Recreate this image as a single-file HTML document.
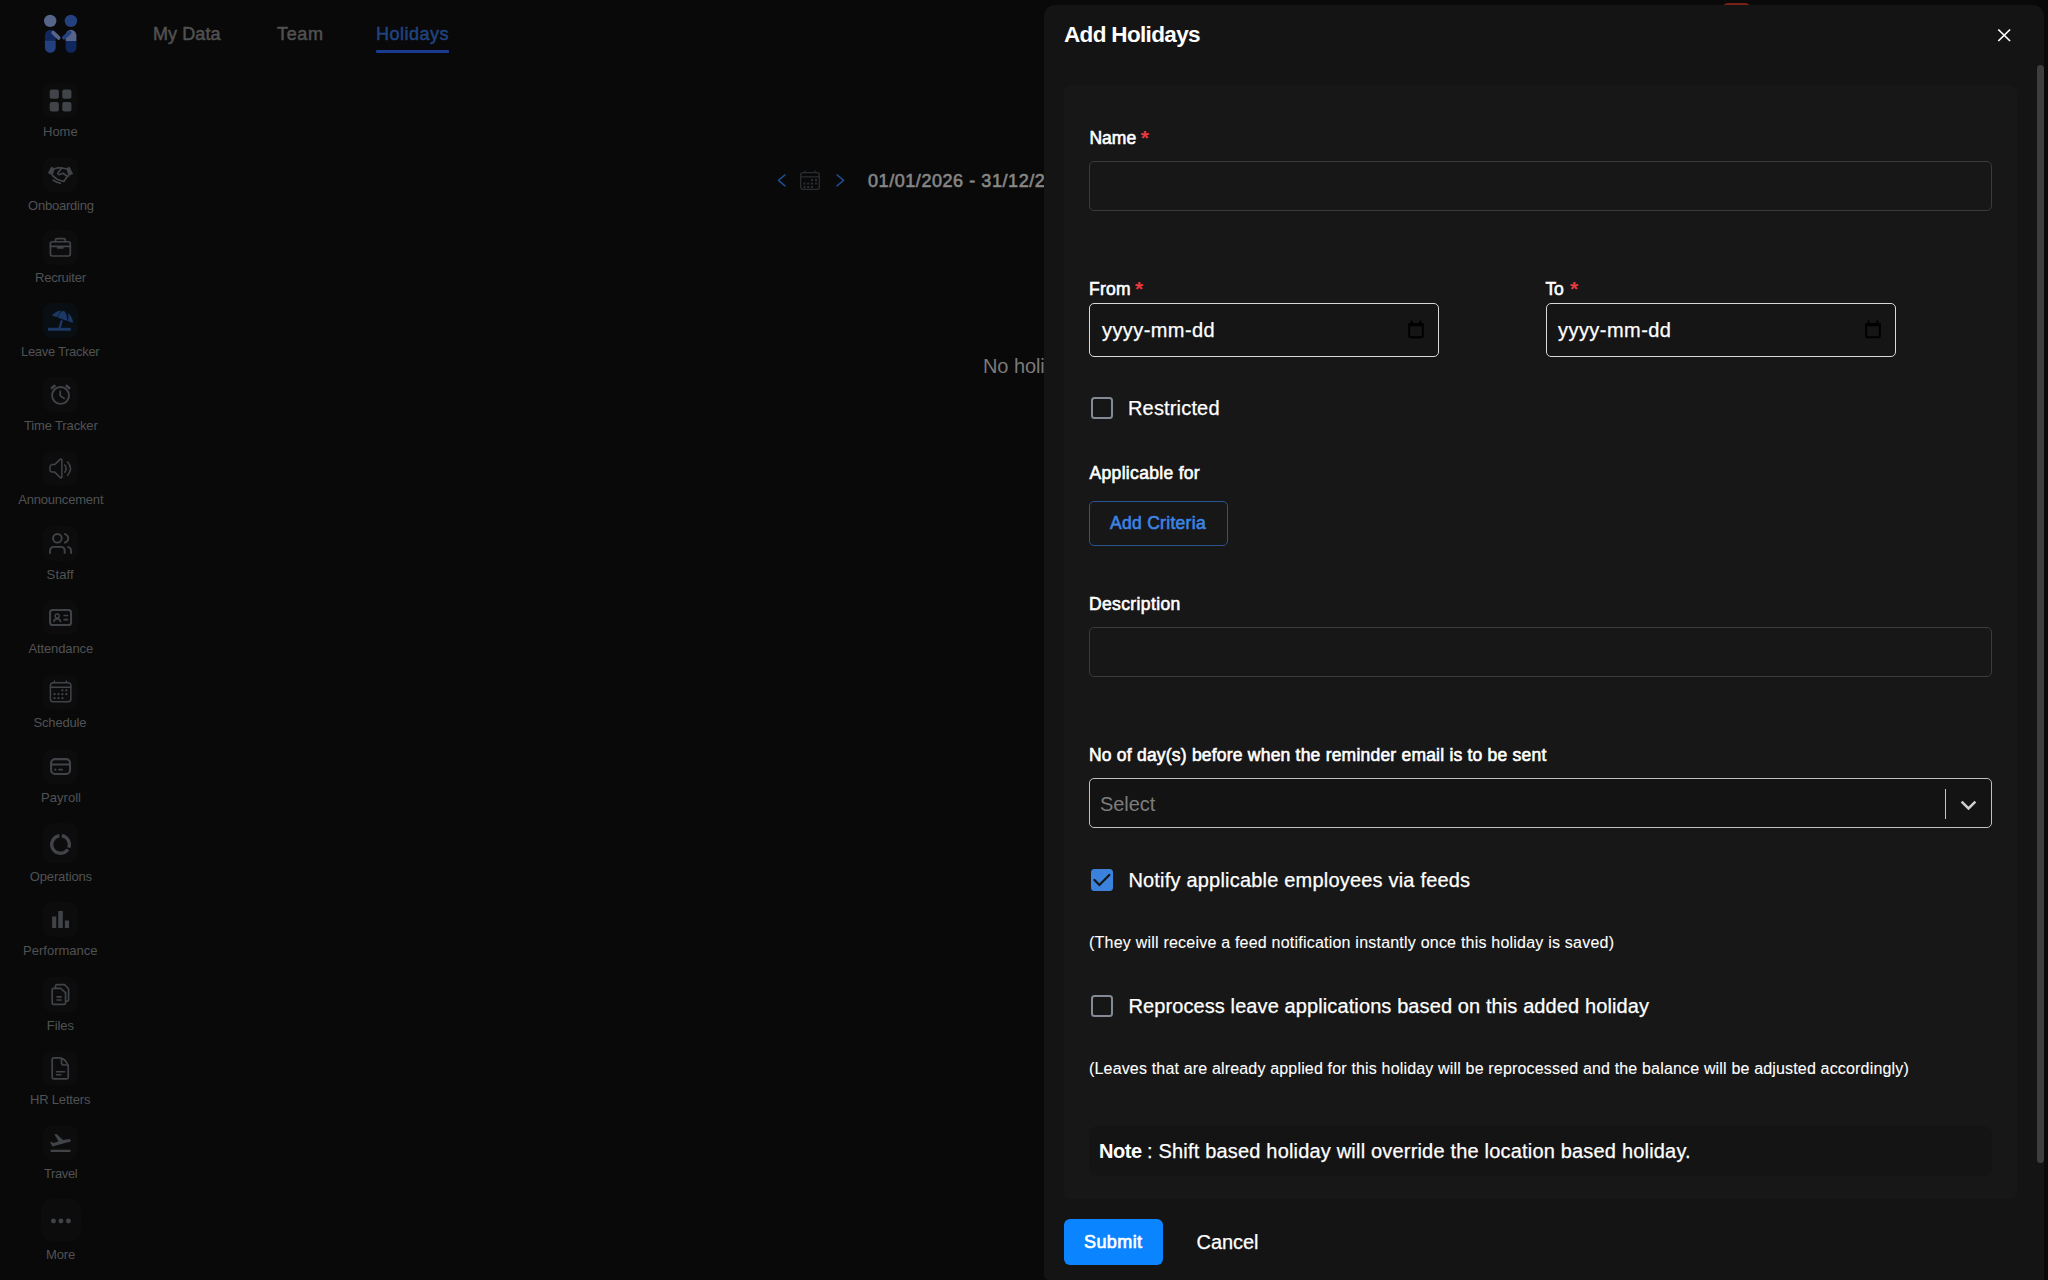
<!DOCTYPE html>
<html lang="en"><head><meta charset="utf-8"><title>Add Holidays</title>
<style>
*{box-sizing:border-box;margin:0;padding:0}
html,body{width:2048px;height:1280px;overflow:hidden;background:#090909;font-family:"Liberation Sans",Arial,sans-serif;}
body{position:relative}
.t{position:absolute;white-space:nowrap;line-height:1;display:block}
.a{position:absolute}
#panel{position:absolute;left:1044px;top:5px;width:1000px;height:1275px;background:#141414;border-radius:11px 11px 0 5px}
#card{position:absolute;left:1064px;top:85px;width:953px;height:1114px;background:#171717;border-radius:7px}
.inp{position:absolute;border:1.25px solid #3b3b3b;border-radius:5px;background:#171717}
.dinp{position:absolute;border:1.5px solid #d9d9d9;border-radius:5px;background:#151515}
.cb{position:absolute;width:22.5px;height:22.5px;border:2.5px solid #838a95;border-radius:3.5px;background:#161616}

</style></head><body>
<!-- ===== background app (dimmed) ===== -->
<svg class="a" style="left:30px;top:5px;width:64px;height:60px" viewBox="30 5 64 60">
<circle cx="50.2" cy="20.9" r="6.2" fill="#56648a"/>
<circle cx="70.9" cy="20.9" r="6.2" fill="#23407f"/>
<path d="M44.9,35.2 a5.4,5.4 0 0 1 10.8,0 V40.6 H44.9 Z" fill="#10275e"/>
<path d="M44.9,40.6 H55.7 V47.4 a5.4,5.4 0 0 1 -10.8,0 Z" fill="#23407f"/>
<path d="M65.6,35.2 a5.4,5.4 0 0 1 10.8,0 V41.1 H65.6 Z" fill="#56648a"/>
<path d="M65.6,41.1 H76.4 V47.4 a5.4,5.4 0 0 1 -10.8,0 Z" fill="#10275e"/>
<path d="M53.2,32.6 L58.6,37.9" stroke="#56648a" stroke-width="3.8" stroke-linecap="round"/>
<path d="M69.6,32.6 L63.9,37.7" stroke="#23407f" stroke-width="3.8" stroke-linecap="round"/>
</svg>
<div class="a" style="left:43px;top:82.5px;width:34.5px;height:35px;border-radius:9px;background:#0c0c0c"></div>
<svg class="a" style="left:43px;top:83px;width:34px;height:34px;overflow:visible" viewBox="186.7 186.7 906.7 906.7" fill="none" stroke="#404348" stroke-linecap="round" stroke-linejoin="round"><rect x="365" y="357" width="245" height="252" rx="55" fill="#404348" stroke="none"/><rect x="365" y="695" width="245" height="252" rx="55" fill="#404348" stroke="none"/><rect x="700" y="357" width="245" height="252" rx="55" fill="#404348" stroke="none"/><rect x="700" y="695" width="245" height="252" rx="55" fill="#404348" stroke="none"/></svg>
<div class="a" style="left:43px;top:156.5px;width:34.5px;height:35px;border-radius:9px;background:#0c0c0c"></div>
<svg class="a" style="left:43px;top:157px;width:34px;height:34px;overflow:visible" viewBox="186.7 186.7 906.7 906.7" fill="none" stroke="#404348" stroke-linecap="round" stroke-linejoin="round"><polygon points="318,612 405,448 505,490 440,680" fill="#404348" stroke="none"/><polygon points="992,640 895,448 800,490 870,690" fill="#404348" stroke="none"/><path d="M500,500 L600,470 L690,480 L800,500" stroke-width="46"/><path d="M440,680 L560,780 L740,840 L840,700 L870,690" stroke-width="46"/><path d="M690,480 L590,600 Q565,665 640,650 L720,620 L830,700" stroke-width="46"/><path d="M455,805 Q540,870 650,885" stroke-width="46"/></svg>
<div class="a" style="left:43px;top:229.5px;width:34.5px;height:35px;border-radius:9px;background:#0c0c0c"></div>
<svg class="a" style="left:43px;top:230px;width:34px;height:34px;overflow:visible" viewBox="186.7 186.7 906.7 906.7" fill="none" stroke="#404348" stroke-linecap="round" stroke-linejoin="round"><rect x="385" y="500" width="530" height="380" rx="50" stroke-width="46"/><path d="M520,495 L520,455 Q520,415 560,415 L740,415 Q780,415 780,455 L780,495" stroke-width="46"/><path d="M385,625 L915,625" stroke-width="46"/><rect x="565" y="640" width="170" height="50" rx="8" fill="#404348" stroke="none"/></svg>
<div class="a" style="left:43px;top:302.5px;width:34.5px;height:35px;border-radius:9px;background:#090e13"></div>
<svg class="a" style="left:43px;top:303px;width:34px;height:34px;overflow:visible" viewBox="186.7 186.7 906.7 906.7" fill="none" stroke="#404348" stroke-linecap="round" stroke-linejoin="round"><path d="M425,520 Q520,400 680,385 Q590,450 565,570 Z" fill="#1c3865" stroke="none"/><path d="M585,580 Q600,440 740,395 Q830,460 835,670 Z" fill="#1c3865" stroke="none"/><path d="M855,455 Q980,560 990,720 L850,665 Q880,560 855,455 Z" fill="#1c3865" stroke="none"/><path d="M690,650 L625,860" stroke="#1c3865" stroke-width="60" stroke-linecap="butt"/><rect x="320" y="850" width="610" height="75" rx="15" fill="#1c3865" stroke="none"/></svg>
<div class="a" style="left:43px;top:376.5px;width:34.5px;height:35px;border-radius:9px;background:#0c0c0c"></div>
<svg class="a" style="left:43px;top:377px;width:34px;height:34px;overflow:visible" viewBox="186.7 186.7 906.7 906.7" fill="none" stroke="#404348" stroke-linecap="round" stroke-linejoin="round"><circle cx="655" cy="680" r="225" stroke-width="50"/><path d="M645,548 L645,690 L768,768" stroke-width="45" stroke-linecap="butt" stroke-linejoin="miter"/><path d="M400,500 L515,405" stroke-width="65" stroke-linecap="butt"/><path d="M795,405 L910,500" stroke-width="65" stroke-linecap="butt"/></svg>
<div class="a" style="left:43px;top:450.5px;width:34.5px;height:35px;border-radius:9px;background:#0c0c0c"></div>
<svg class="a" style="left:43px;top:451px;width:34px;height:34px;overflow:visible" viewBox="186.7 186.7 906.7 906.7" fill="none" stroke="#404348" stroke-linecap="round" stroke-linejoin="round"><path d="M690,415 L690,895 Q660,910 640,890 L500,750 L420,750 Q375,740 372,690 L372,605 Q380,555 420,550 L500,550 L640,410 Q665,395 690,415 Z" stroke-width="40"/><path d="M758,545 Q850,655 758,765" stroke-width="40" stroke-linecap="butt"/><path d="M835,465 Q1005,655 835,845" stroke-width="40" stroke-linecap="butt"/></svg>
<div class="a" style="left:43px;top:525.5px;width:34.5px;height:35px;border-radius:9px;background:#0c0c0c"></div>
<svg class="a" style="left:43px;top:526px;width:34px;height:34px;overflow:visible" viewBox="186.7 186.7 906.7 906.7" fill="none" stroke="#404348" stroke-linecap="round" stroke-linejoin="round"><circle cx="570" cy="515" r="115" stroke-width="50"/><path d="M375,925 L375,850 Q375,745 480,745 L660,745 Q765,745 765,850 L765,925" stroke-width="50" stroke-linecap="butt"/><path d="M750,395 Q860,420 860,515 Q860,610 750,635" stroke-width="50" stroke-linecap="butt"/><path d="M835,745 Q935,760 935,850 L935,925" stroke-width="50" stroke-linecap="butt"/></svg>
<div class="a" style="left:43px;top:599.5px;width:34.5px;height:35px;border-radius:9px;background:#0c0c0c"></div>
<svg class="a" style="left:43px;top:600px;width:34px;height:34px;overflow:visible" viewBox="186.7 186.7 906.7 906.7" fill="none" stroke="#404348" stroke-linecap="round" stroke-linejoin="round"><rect x="375" y="455" width="560" height="400" rx="70" stroke-width="55"/><circle cx="565" cy="615" r="55" stroke-width="40"/><path d="M478,755 Q490,690 565,690 Q640,690 652,755" stroke-width="46"/><path d="M750,600 L840,600 M750,710 L840,710" stroke-width="45"/></svg>
<div class="a" style="left:43px;top:674.5px;width:34.5px;height:35px;border-radius:9px;background:#0c0c0c"></div>
<svg class="a" style="left:43px;top:675px;width:34px;height:34px;overflow:visible" viewBox="186.7 186.7 906.7 906.7" fill="none" stroke="#404348" stroke-linecap="round" stroke-linejoin="round"><rect x="385" y="395" width="545" height="505" rx="75" stroke-width="40"/><path d="M385,515 L930,515" stroke-width="40"/><path d="M490,335 L490,400 M810,335 L810,400" stroke-width="40" stroke-linecap="butt"/><circle cx="705" cy="595" r="30" fill="#404348" stroke="none"/><circle cx="810" cy="595" r="30" fill="#404348" stroke="none"/><circle cx="495" cy="700" r="30" fill="#404348" stroke="none"/><circle cx="600" cy="700" r="30" fill="#404348" stroke="none"/><circle cx="705" cy="700" r="30" fill="#404348" stroke="none"/><circle cx="810" cy="700" r="30" fill="#404348" stroke="none"/><circle cx="495" cy="805" r="30" fill="#404348" stroke="none"/><circle cx="600" cy="805" r="30" fill="#404348" stroke="none"/><circle cx="705" cy="805" r="30" fill="#404348" stroke="none"/></svg>
<div class="a" style="left:43px;top:748.5px;width:34.5px;height:35px;border-radius:9px;background:#0c0c0c"></div>
<svg class="a" style="left:43px;top:749px;width:34px;height:34px;overflow:visible" viewBox="186.7 186.7 906.7 906.7" fill="none" stroke="#404348" stroke-linecap="round" stroke-linejoin="round"><rect x="402" y="457" width="506" height="396" rx="105" stroke-width="55"/><path d="M402,600 L908,600" stroke-width="55"/><circle cx="515" cy="738" r="28" fill="#404348" stroke="none"/><path d="M615,738 L695,738" stroke-width="50"/></svg>
<div class="a" style="left:43px;top:823px;width:34.5px;height:40px;border-radius:9px;background:#0c0c0c"></div>
<svg class="a" style="left:43px;top:828px;width:34px;height:34px;overflow:visible" viewBox="186.7 186.7 906.7 906.7" fill="none" stroke="#404348" stroke-linecap="round" stroke-linejoin="round"><path d="M687.7,392.3 A235,235 0 0 1 872.9,713.0" stroke-width="90" stroke-linecap="butt"/><path d="M849.8,756.4 A235,235 0 1 1 622.3,392.3" stroke-width="90" stroke-linecap="butt"/></svg>
<div class="a" style="left:43px;top:901.5px;width:34.5px;height:35px;border-radius:9px;background:#0c0c0c"></div>
<svg class="a" style="left:43px;top:902px;width:34px;height:34px;overflow:visible" viewBox="186.7 186.7 906.7 906.7" fill="none" stroke="#404348" stroke-linecap="round" stroke-linejoin="round"><rect x="430" y="575" width="110" height="305" rx="8" fill="#404348" stroke="none"/><rect x="593" y="430" width="122" height="450" rx="8" fill="#404348" stroke="none"/><rect x="770" y="680" width="110" height="200" rx="8" fill="#404348" stroke="none"/></svg>
<div class="a" style="left:43px;top:976.5px;width:34.5px;height:35px;border-radius:9px;background:#0c0c0c"></div>
<svg class="a" style="left:43px;top:977px;width:34px;height:34px;overflow:visible" viewBox="186.7 186.7 906.7 906.7" fill="none" stroke="#404348" stroke-linecap="round" stroke-linejoin="round"><path d="M520,470 L520,430 Q520,388 565,388 L760,388 L868,500 L868,795 Q868,828 838,828 L805,828" stroke-width="45"/><path d="M432,525 Q432,492 470,492 L660,492 L788,602 L788,885 Q788,918 750,918 L470,918 Q432,918 432,880 Z" stroke-width="45"/><path d="M545,715 L685,715 M545,800 L685,800" stroke-width="45" stroke-linecap="butt"/></svg>
<div class="a" style="left:43px;top:1050.5px;width:34.5px;height:35px;border-radius:9px;background:#0c0c0c"></div>
<svg class="a" style="left:43px;top:1051px;width:34px;height:34px;overflow:visible" viewBox="186.7 186.7 906.7 906.7" fill="none" stroke="#404348" stroke-linecap="round" stroke-linejoin="round"><path d="M432,412 Q432,368 480,368 L640,368 Q800,400 860,590 L860,885 Q860,928 820,928 L480,928 Q432,928 432,885 Z" stroke-width="45"/><path d="M680,388 L680,500 Q680,560 740,560 L850,560" stroke-width="45"/><path d="M545,738 L765,738 M545,820 L660,820" stroke-width="40"/></svg>
<div class="a" style="left:43px;top:1124.5px;width:34.5px;height:35px;border-radius:9px;background:#0c0c0c"></div>
<svg class="a" style="left:43px;top:1125px;width:34px;height:34px;overflow:visible" viewBox="186.7 186.7 906.7 906.7" fill="none" stroke="#404348" stroke-linecap="round" stroke-linejoin="round"><path d="M490,432 L548,427 L720,590 L895,560 Q945,575 922,625 L440,760 L375,650 L412,635 L462,665 L600,625 Z" fill="#404348" stroke="none"/><rect x="390" y="850" width="530" height="55" rx="6" fill="#404348" stroke="none"/></svg>
<div class="a" style="left:41px;top:1199px;width:40px;height:42px;border-radius:10px;background:#0c0c0c"></div>
<svg class="a" style="left:43px;top:1204px;width:34px;height:34px;overflow:visible" viewBox="186.7 186.7 906.7 906.7" fill="none" stroke="#404348" stroke-linecap="round" stroke-linejoin="round"><circle cx="465" cy="640" r="66" fill="#404348" stroke="none"/><circle cx="665" cy="640" r="66" fill="#404348" stroke="none"/><circle cx="865" cy="640" r="66" fill="#404348" stroke="none"/></svg>
<div class="a" style="left:376px;top:50px;width:73px;height:3px;background:#1a3b8f;border-radius:1px"></div>
<svg class="a" style="left:770px;top:165px;width:84px;height:32px" viewBox="770 165 84 32" fill="none">
<path d="M785.0,174.9 L778.4,180.4 L785.0,185.9" stroke="#1f4f90" stroke-width="1.4" stroke-linecap="round" stroke-linejoin="round"/>
<path d="M837.0,174.9 L843.6,180.4 L837.0,185.9" stroke="#1f4f90" stroke-width="1.4" stroke-linecap="round" stroke-linejoin="round"/>
<g stroke="#2a2d32" stroke-width="1.3">
<rect x="800.7" y="172.7" width="18.6" height="16.6" rx="2.2"/>
<path d="M800.7,176.8 H819.3 M805,170.5 V173 M815,170.5 V173"/>
</g>
<g fill="#2a2d32">
<rect x="811" y="179" width="2" height="2"/><rect x="815" y="179" width="2" height="2"/>
<rect x="803.5" y="182.5" width="2" height="2"/><rect x="807.2" y="182.5" width="2" height="2"/><rect x="811" y="182.5" width="2" height="2"/><rect x="815" y="182.5" width="2" height="2"/>
<rect x="803.5" y="186" width="2" height="2"/><rect x="807.2" y="186" width="2" height="2"/><rect x="811" y="186" width="2" height="2"/>
</g>
</svg>
<div class="a" style="left:1722px;top:3px;width:29px;height:12px;border-radius:6px;background:#7b2116"></div>
<span class="t" id="bg_mydata" style="left:153.00px;top:25.00px;font-size:18px;color:#515151;letter-spacing:0.083px;-webkit-text-stroke:0.5px #515151;">My Data</span>
<span class="t" id="bg_team" style="left:277.00px;top:25.00px;font-size:18px;color:#515151;letter-spacing:0.667px;-webkit-text-stroke:0.5px #515151;">Team</span>
<span class="t" id="bg_holidays" style="left:376.00px;top:25.00px;font-size:18px;color:#204480;letter-spacing:0.500px;-webkit-text-stroke:0.5px #204480;">Holidays</span>
<span class="t" id="bg_sb0" style="left:43.00px;top:125.00px;font-size:13px;color:#505254;">Home</span>
<span class="t" id="bg_sb1" style="left:28.00px;top:199.00px;font-size:13px;color:#505254;letter-spacing:-0.222px;">Onboarding</span>
<span class="t" id="bg_sb2" style="left:35.00px;top:271.00px;font-size:13px;color:#505254;letter-spacing:-0.219px;">Recruiter</span>
<span class="t" id="bg_sb3" style="left:21.00px;top:345.00px;font-size:13px;color:#505254;letter-spacing:-0.312px;">Leave Tracker</span>
<span class="t" id="bg_sb4" style="left:24.00px;top:419.00px;font-size:13px;color:#505254;letter-spacing:-0.145px;">Time Tracker</span>
<span class="t" id="bg_sb5" style="left:18.20px;top:493.00px;font-size:13px;color:#505254;letter-spacing:-0.195px;">Announcement</span>
<span class="t" id="bg_sb6" style="left:46.60px;top:568.00px;font-size:13px;color:#505254;letter-spacing:0.125px;">Staff</span>
<span class="t" id="bg_sb7" style="left:28.40px;top:642.00px;font-size:13px;color:#505254;letter-spacing:-0.111px;">Attendance</span>
<span class="t" id="bg_sb8" style="left:33.60px;top:716.00px;font-size:13px;color:#505254;letter-spacing:-0.200px;">Schedule</span>
<span class="t" id="bg_sb9" style="left:41.00px;top:791.00px;font-size:13px;color:#505254;letter-spacing:0.042px;">Payroll</span>
<span class="t" id="bg_sb10" style="left:29.80px;top:870.00px;font-size:13px;color:#505254;letter-spacing:-0.144px;">Operations</span>
<span class="t" id="bg_sb11" style="left:23.00px;top:944.00px;font-size:13px;color:#505254;letter-spacing:0.015px;">Performance</span>
<span class="t" id="bg_sb12" style="left:46.80px;top:1019.00px;font-size:13px;color:#505254;letter-spacing:-0.088px;">Files</span>
<span class="t" id="bg_sb13" style="left:30.00px;top:1093.00px;font-size:13px;color:#505254;letter-spacing:-0.194px;">HR Letters</span>
<span class="t" id="bg_sb14" style="left:44.00px;top:1167.00px;font-size:13px;color:#505254;letter-spacing:-0.400px;">Travel</span>
<span class="t" id="bg_sb15" style="left:46.00px;top:1248.00px;font-size:13px;color:#505254;letter-spacing:-0.167px;">More</span>
<span class="t" id="bg_date" style="left:868.00px;top:172.00px;font-size:18px;color:#868686;letter-spacing:0.560px;-webkit-text-stroke:0.6px #868686;">01/01/2026 - 31/12/2026</span>
<span class="t" id="bg_nohol" style="left:983.00px;top:356.00px;font-size:20px;color:#7a7a7a;letter-spacing:-0.075px;">No holidays found</span>
<!-- ===== side panel ===== -->
<div id="panel"></div><div id="card"></div>
<div class="a" style="left:2037.25px;top:65px;width:6.75px;height:1097.5px;border-radius:3.5px;background:#3e3e3e"></div>
<svg class="a" style="left:1990px;top:22px;width:28px;height:28px" viewBox="1990 22 28 28"><path d="M1998.3,29.5 L2010.1,41.0 M2010.1,29.5 L1998.3,41.0" stroke="#fff" stroke-width="1.7" stroke-linecap="butt"/></svg>
<div class="inp" style="left:1089px;top:161px;width:903.25px;height:49.75px"></div>
<div class="dinp" style="left:1089px;top:303px;width:350.25px;height:53.75px"></div>
<div class="dinp" style="left:1545.75px;top:303px;width:350.25px;height:53.75px"></div>
<svg class="a" style="left:1407px;top:318px;width:20px;height:24px" viewBox="0 0 20 24"><rect x="2.2" y="6" width="13.6" height="13.2" rx="1.5" fill="none" stroke="#000" stroke-width="2"/><rect x="1.2" y="5" width="15.6" height="3.2" rx="1" fill="#000"/><rect x="3.6" y="2.6" width="2.2" height="3.4" fill="#000"/><rect x="12.2" y="2.6" width="2.2" height="3.4" fill="#000"/></svg>
<svg class="a" style="left:1863.5px;top:318px;width:20px;height:24px" viewBox="0 0 20 24"><rect x="2.2" y="6" width="13.6" height="13.2" rx="1.5" fill="none" stroke="#000" stroke-width="2"/><rect x="1.2" y="5" width="15.6" height="3.2" rx="1" fill="#000"/><rect x="3.6" y="2.6" width="2.2" height="3.4" fill="#000"/><rect x="12.2" y="2.6" width="2.2" height="3.4" fill="#000"/></svg>
<div class="cb" style="left:1090.75px;top:396.75px"></div>
<div class="a" style="left:1089px;top:501px;width:139px;height:44.75px;border:1.25px solid #2b5590;border-radius:5px"></div>
<div class="inp" style="left:1089px;top:627px;width:903.25px;height:49.75px"></div>
<div class="dinp" style="left:1089px;top:778px;width:903.25px;height:50.25px;border:1.25px solid #c0c0c0;background:#131313"></div>
<div class="a" style="left:1945px;top:789.25px;width:1.25px;height:29.5px;background:#c4c4c4"></div>
<svg class="a" style="left:1956px;top:794px;width:24px;height:22px" viewBox="1956 794 24 22"><path d="M1961.6,801.6 L1968.5,808.4 L1975.4,801.6" fill="none" stroke="#cfcfcf" stroke-width="2.6" stroke-linecap="butt" stroke-linejoin="miter"/></svg>
<div class="cb" style="left:1090.75px;top:868.75px;background:#3b82dc;border-color:#3b82dc"></div>
<svg class="a" style="left:1090px;top:868px;width:24px;height:24px" viewBox="1090 868 24 24"><path d="M1094.5,879.9 L1099.4,885.0 L1109.3,874.9" fill="none" stroke="#151515" stroke-width="2.2" stroke-linecap="round" stroke-linejoin="miter"/></svg>
<div class="cb" style="left:1090.75px;top:994.9px"></div>
<div class="a" style="left:1089px;top:1126.25px;width:903.25px;height:49.5px;border-radius:9px;background:#141414"></div>
<div class="a" style="left:1064.25px;top:1219px;width:98.75px;height:46px;border-radius:6px;background:#0a84ff"></div>
<span class="t" id="title" style="left:1064.00px;top:24.00px;font-size:22.5px;color:#ffffff;font-weight:700;letter-spacing:-0.659px;">Add Holidays</span>
<span class="t" id="l_name" style="left:1089.40px;top:130.00px;font-size:17.5px;color:#ffffff;letter-spacing:0.033px;-webkit-text-stroke:0.6px #ffffff;">Name</span>
<span class="t" id="a_name" style="left:1140.80px;top:127.00px;font-size:21px;color:#ea3a40;font-weight:700;">*</span>
<span class="t" id="l_from" style="left:1089.00px;top:281.00px;font-size:17.5px;color:#ffffff;letter-spacing:0.250px;-webkit-text-stroke:0.6px #ffffff;">From</span>
<span class="t" id="a_from" style="left:1135.00px;top:277.71px;font-size:21px;color:#ea3a40;font-weight:700;">*</span>
<span class="t" id="l_to" style="left:1545.60px;top:281.00px;font-size:17.5px;color:#ffffff;letter-spacing:-0.300px;-webkit-text-stroke:0.6px #ffffff;">To</span>
<span class="t" id="a_to" style="left:1570.00px;top:277.71px;font-size:21px;color:#ea3a40;font-weight:700;">*</span>
<span class="t" id="d_from" style="left:1102.00px;top:320.10px;font-size:20px;color:#ffffff;letter-spacing:0.417px;-webkit-text-stroke:0.25px #ffffff;">yyyy-mm-dd</span>
<span class="t" id="d_to" style="left:1558.00px;top:320.10px;font-size:20px;color:#ffffff;letter-spacing:0.456px;-webkit-text-stroke:0.25px #ffffff;">yyyy-mm-dd</span>
<span class="t" id="c_restricted" style="left:1128.00px;top:398.00px;font-size:20px;color:#ffffff;letter-spacing:0.167px;-webkit-text-stroke:0.25px #ffffff;">Restricted</span>
<span class="t" id="l_app" style="left:1089.60px;top:465.00px;font-size:17.5px;color:#ffffff;letter-spacing:0.312px;-webkit-text-stroke:0.6px #ffffff;">Applicable for</span>
<span class="t" id="b_add" style="left:1110.00px;top:515.00px;font-size:17.5px;color:#3d84e3;letter-spacing:0.295px;-webkit-text-stroke:0.6px #3d84e3;">Add Criteria</span>
<span class="t" id="l_desc" style="left:1089.00px;top:596.00px;font-size:17.5px;color:#ffffff;letter-spacing:0.375px;-webkit-text-stroke:0.6px #ffffff;">Description</span>
<span class="t" id="l_days" style="left:1089.00px;top:747.00px;font-size:17.5px;color:#ffffff;letter-spacing:0.210px;-webkit-text-stroke:0.6px #ffffff;">No of day(s) before when the reminder email is to be sent</span>
<span class="t" id="s_select" style="left:1100.00px;top:793.50px;font-size:20px;color:#7c7c7c;letter-spacing:-0.050px;">Select</span>
<span class="t" id="c_notify" style="left:1128.40px;top:870.00px;font-size:20px;color:#ffffff;letter-spacing:0.197px;-webkit-text-stroke:0.25px #ffffff;">Notify applicable employees via feeds</span>
<span class="t" id="h_notify" style="left:1089.00px;top:935.00px;font-size:16px;color:#ffffff;letter-spacing:0.217px;-webkit-text-stroke:0.1px #ffffff;">(They will receive a feed notification instantly once this holiday is saved)</span>
<span class="t" id="c_reproc" style="left:1128.40px;top:996.00px;font-size:20px;color:#ffffff;letter-spacing:0.105px;-webkit-text-stroke:0.25px #ffffff;">Reprocess leave applications based on this added holiday</span>
<span class="t" id="h_reproc" style="left:1089.00px;top:1061.25px;font-size:16px;color:#ffffff;letter-spacing:0.169px;-webkit-text-stroke:0.1px #ffffff;">(Leaves that are already applied for this holiday will be reprocessed and the balance will be adjusted accordingly)</span>
<span class="t" id="n_note" style="left:1099.00px;top:1140.50px;font-size:20px;color:#ffffff;font-weight:700;letter-spacing:-0.417px;">Note</span>
<span class="t" id="n_text" style="left:1147.00px;top:1140.50px;font-size:20px;color:#ffffff;letter-spacing:0.185px;-webkit-text-stroke:0.25px #ffffff;">: Shift based holiday will override the location based holiday.</span>
<span class="t" id="b_submit" style="left:1084.00px;top:1233.00px;font-size:18px;color:#ffffff;letter-spacing:0.420px;-webkit-text-stroke:0.65px #ffffff;">Submit</span>
<span class="t" id="b_cancel" style="left:1196.60px;top:1231.75px;font-size:20px;color:#ffffff;letter-spacing:-0.060px;-webkit-text-stroke:0.25px #ffffff;">Cancel</span>
</body></html>
